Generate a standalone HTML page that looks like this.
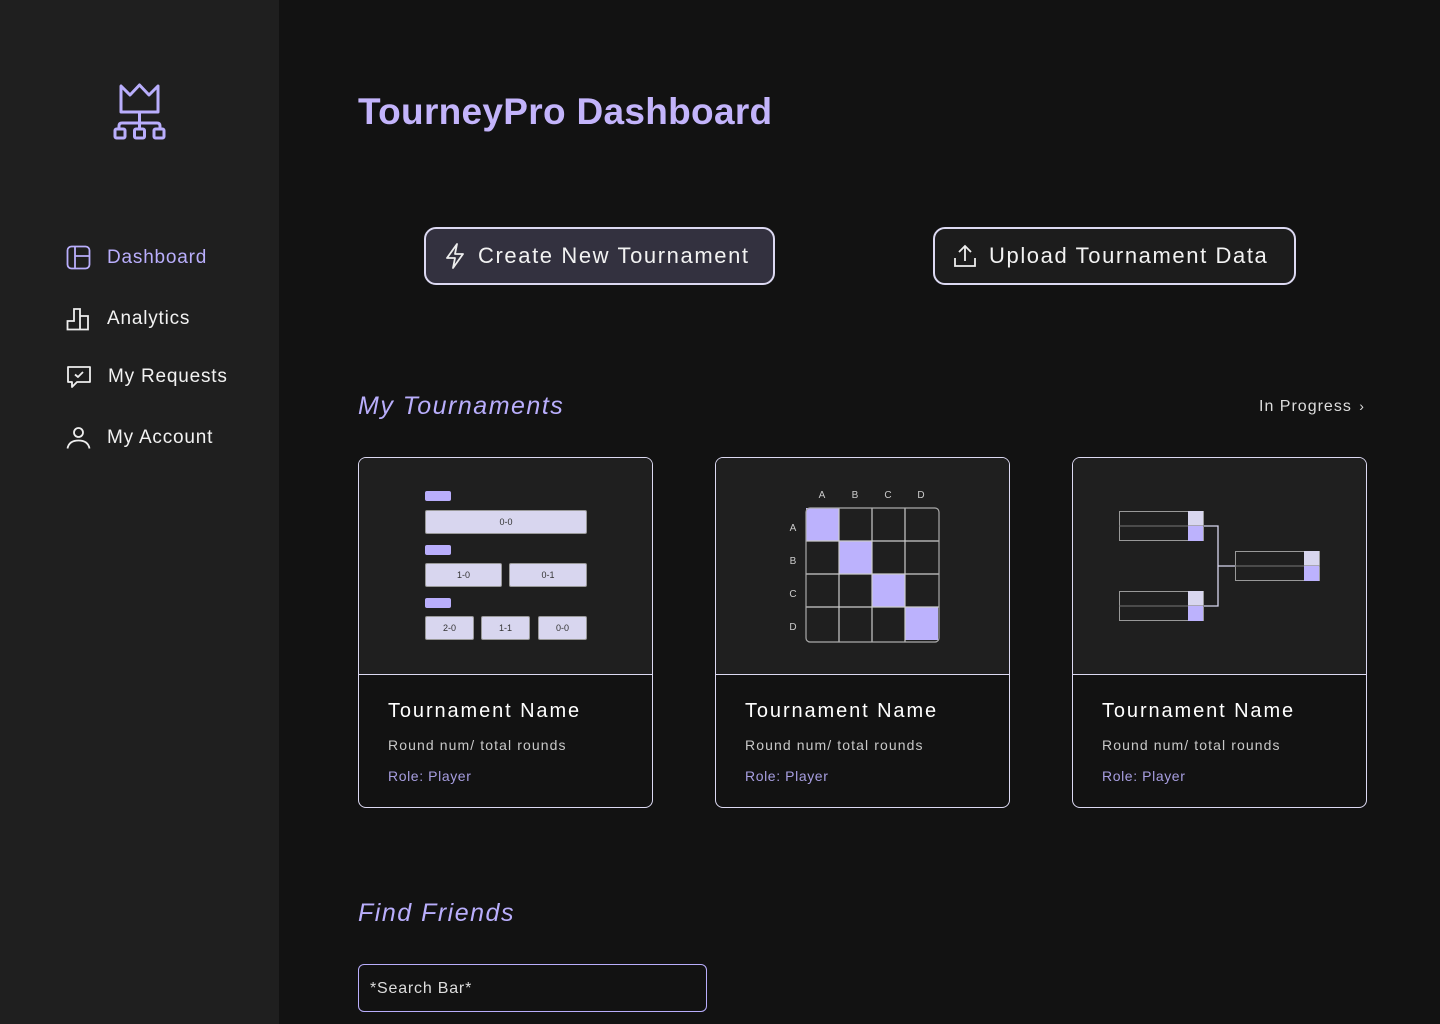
<!DOCTYPE html>
<html><head><meta charset="utf-8"><style>
*{margin:0;padding:0;box-sizing:border-box}
body{width:1440px;height:1024px;background:#121212;font-family:"Liberation Sans",sans-serif;position:relative;overflow:hidden;color:#fff}
.side{position:absolute;left:0;top:0;width:279px;height:1024px;background:#1f1f1f}
.nav{position:absolute;left:66px;display:flex;align-items:center;font-size:19px;color:#f2f2f2;letter-spacing:0.8px}
.nav svg{margin-right:16px}
.abs{position:absolute}
h1{position:absolute;left:358px;top:91px;font-size:37px;font-weight:bold;color:#c3b4fb;letter-spacing:0.3px}
.btn{position:absolute;top:227px;height:58px;border:2px solid #dcd9f2;border-radius:12px;display:flex;align-items:center;font-size:22px;color:#f2f2f2;padding-left:18px;letter-spacing:1.6px}
.sec{position:absolute;left:358px;font-size:25px;font-style:italic;color:#b9aefc;letter-spacing:1.5px}
.card{position:absolute;top:457px;width:295px;height:351px;border:1px solid #dcd9f2;border-radius:8px;overflow:hidden;background:#121212}
.card .top{position:absolute;left:0;top:0;width:100%;height:217px;background:#1f1f1f;border-bottom:1px solid #dcd9f2}
.card .nm{position:absolute;left:29px;top:242px;font-size:20px;color:#fff;letter-spacing:1.9px}
.card .rd{position:absolute;left:29px;top:279px;font-size:14px;color:#c8c8c8;letter-spacing:1.1px}
.card .ro{position:absolute;left:29px;top:310px;font-size:14px;color:#a79ee0;letter-spacing:0.6px}
.pill{position:absolute;background:#b9aefc;border-radius:2px;width:26px;height:10px}
.box{position:absolute;background:#d8d6ef;border-radius:2px;height:24px;font-size:9px;color:#333;display:flex;align-items:center;justify-content:center;border:1px solid #999}
</style></head><body>
<div class="side">
<svg class="abs" style="left:112px;top:82px" width="56" height="60" viewBox="0 0 56 60" fill="none" stroke="#b9aefc" stroke-width="3" stroke-linejoin="round"><path d="M9 4 L9 30 L46 30 L46 4 L37 13 L27.5 3 L18 13 Z"/><path d="M27.5 30 V40 M7 47 V44 Q7 41 10 41 H45 Q48 41 48 44 V47 M27.5 41 V47"/><rect x="3" y="47" width="10" height="9" rx="1.5"/><rect x="22.5" y="47" width="10" height="9" rx="1.5"/><rect x="42" y="47" width="10" height="9" rx="1.5"/></svg>
<div class="nav" style="top:245px;color:#b9aefc"><svg width="25" height="25" viewBox="0 0 25 25" fill="none" stroke="#b9aefc" stroke-width="1.8"><rect x="1.5" y="1.5" width="22" height="22" rx="4"/><path d="M9 1.5V23.5M9 11H23.5"/></svg>Dashboard</div>
<div class="nav" style="top:306px"><svg width="25" height="25" viewBox="0 0 25 25" fill="none" stroke="#eee" stroke-width="1.8"><path d="M1.5 23.5V15H8V3H14V23.5ZM14 10H22V23.5H1.5"/></svg>Analytics</div>
<div class="nav" style="top:364px"><svg width="26" height="26" viewBox="0 0 26 26" fill="none" stroke="#eee" stroke-width="1.8" stroke-linejoin="round"><path d="M2 3H24V18H11L6 23V18H2Z"/><path d="M9 10.5L12 13L17 8"/></svg>My Requests</div>
<div class="nav" style="top:425px"><svg width="25" height="25" viewBox="0 0 25 25" fill="none" stroke="#eee" stroke-width="1.8"><circle cx="12.5" cy="7.5" r="4.5"/><path d="M1.5 23.5Q3 15.5 12.5 15.5T23.5 23.5"/></svg>My Account</div>
</div>
<h1>TourneyPro Dashboard</h1>
<div class="btn" style="left:424px;width:351px;background:#33313f"><svg width="22" height="26" viewBox="0 0 22 26" fill="none" stroke="#eee" stroke-width="1.8" stroke-linejoin="round"><path d="M13 1L3 15H11L9 25L19 11H11Z"/></svg><span style="margin-left:12px">Create New Tournament</span></div>
<div class="btn" style="left:933px;width:363px;background:#1c1c1c"><svg width="24" height="26" viewBox="0 0 24 26" fill="none" stroke="#eee" stroke-width="1.8"><path d="M12 18V3M6 9L12 3L18 9M2 15V23H22V15"/></svg><span style="margin-left:12px">Upload Tournament Data</span></div>
<div class="sec" style="top:392px">My Tournaments</div>
<div class="abs" style="left:1259px;top:398px;font-size:16px;color:#ddd;letter-spacing:1px">In Progress <span style="font-size:14px;margin-left:2px">&#8250;</span></div>

<div class="card" style="left:358px"><div class="top">
<div class="pill" style="left:66px;top:33px"></div>
<div class="box" style="left:66px;top:52px;width:162px">0-0</div>
<div class="pill" style="left:66px;top:87px"></div>
<div class="box" style="left:66px;top:105px;width:77px">1-0</div>
<div class="box" style="left:150px;top:105px;width:78px">0-1</div>
<div class="pill" style="left:66px;top:140px"></div>
<div class="box" style="left:66px;top:158px;width:49px">2-0</div>
<div class="box" style="left:122px;top:158px;width:49px">1-1</div>
<div class="box" style="left:179px;top:158px;width:49px">0-0</div>
</div><div class="nm">Tournament Name</div><div class="rd">Round num/ total rounds</div><div class="ro">Role: Player</div></div>

<div class="card" style="left:715px"><div class="top">
<svg class="abs" style="left:0;top:0" width="295" height="217" font-family="Liberation Sans" font-size="10" fill="#ccc">
<text x="106" y="40" text-anchor="middle">A</text><text x="139" y="40" text-anchor="middle">B</text><text x="172" y="40" text-anchor="middle">C</text><text x="205" y="40" text-anchor="middle">D</text>
<text x="77" y="73" text-anchor="middle">A</text><text x="77" y="106" text-anchor="middle">B</text><text x="77" y="139" text-anchor="middle">C</text><text x="77" y="172" text-anchor="middle">D</text>
<rect x="90" y="50" width="33" height="33" fill="#bcb2fd"/><rect x="123" y="83" width="33" height="33" fill="#bcb2fd"/><rect x="156" y="116" width="33" height="33" fill="#bcb2fd"/><rect x="189" y="149" width="33" height="33" fill="#bcb2fd"/>
<path d="M123 50V184M156 50V184M189 50V184M90 83H223M90 116H223M90 149H223" stroke="#ccc" stroke-width="1.2"/>
<rect x="90" y="50" width="133" height="134" rx="4" fill="none" stroke="#aaa" stroke-width="1.2"/>
</svg></div><div class="nm">Tournament Name</div><div class="rd">Round num/ total rounds</div><div class="ro">Role: Player</div></div>

<div class="card" style="left:1072px"><div class="top">
<svg class="abs" style="left:0;top:0" width="295" height="217" fill="none" stroke-width="1">
<g transform="translate(46,53)">
<rect x="0.5" y="0.5" width="84" height="29" stroke="#999"/><path d="M0 15H85" stroke="#777"/><rect x="69" y="0" width="15" height="14.5" fill="#d8d6ef"/><rect x="69" y="15" width="15" height="15" fill="#bcb2fd"/>
</g>
<g transform="translate(46,133)">
<rect x="0.5" y="0.5" width="84" height="29" stroke="#999"/><path d="M0 15H85" stroke="#777"/><rect x="69" y="0" width="15" height="14.5" fill="#d8d6ef"/><rect x="69" y="15" width="15" height="15" fill="#bcb2fd"/>
</g>
<g transform="translate(162,93)">
<rect x="0.5" y="0.5" width="84" height="29" stroke="#999"/><path d="M0 15H85" stroke="#777"/><rect x="69" y="0" width="15" height="14.5" fill="#d8d6ef"/><rect x="69" y="15" width="15" height="15" fill="#bcb2fd"/>
</g>
<path d="M131 68H145V148H131M145 108H162" stroke="#d8d6ef" stroke-width="1.3"/>
</svg></div><div class="nm">Tournament Name</div><div class="rd">Round num/ total rounds</div><div class="ro">Role: Player</div></div>

<div class="sec" style="top:899px">Find Friends</div>
<div class="abs" style="left:358px;top:964px;width:349px;height:48px;border:1px solid #b9aefc;border-radius:6px;font-size:16px;color:#ddd;padding:15px 0 0 11px;letter-spacing:0.8px">*Search Bar*</div>
</body></html>
